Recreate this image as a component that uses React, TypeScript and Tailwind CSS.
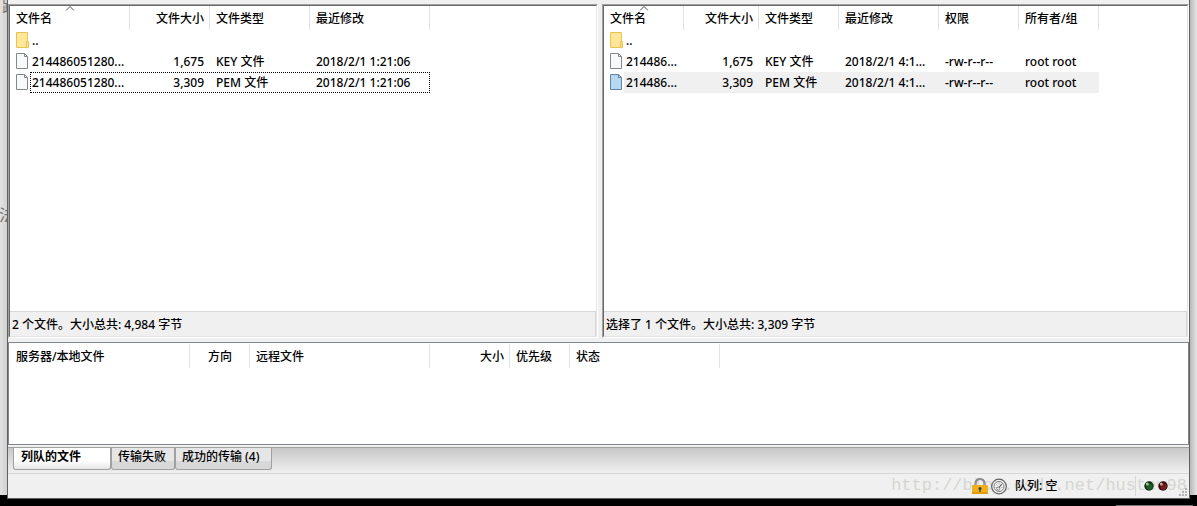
import { type ReactNode } from "react";
import clsx from "clsx";

type Column = { label: string; width: string; align?: "right" | "center"; sorted?: boolean };
type Row = { cells: string[]; icon: "folder" | "file"; state?: "focused" | "selected" };

const localColumns: Column[] = [
  { label: "文件名", width: "w-[120px]", sorted: true },
  { label: "文件大小", width: "w-[80px]", align: "right" },
  { label: "文件类型", width: "w-[100px]" },
  { label: "最近修改", width: "w-[120px]" },
];

const remoteColumns: Column[] = [
  { label: "文件名", width: "w-[80px]", sorted: true },
  { label: "文件大小", width: "w-[75px]", align: "right" },
  { label: "文件类型", width: "w-[80px]" },
  { label: "最近修改", width: "w-[100px]" },
  { label: "权限", width: "w-[80px]" },
  { label: "所有者/组", width: "w-[80px]" },
];

const queueColumns: Column[] = [
  { label: "服务器/本地文件", width: "w-[180px]" },
  { label: "方向", width: "w-[60px]", align: "center" },
  { label: "远程文件", width: "w-[180px]" },
  { label: "大小", width: "w-[80px]", align: "right" },
  { label: "优先级", width: "w-[60px]" },
  { label: "状态", width: "w-[150px]" },
];

const localRows: Row[] = [
  { icon: "folder", cells: ["..", "", "", ""] },
  { icon: "file", cells: ["214486051280...", "1,675", "KEY 文件", "2018/2/1 1:21:06"] },
  { icon: "file", state: "focused", cells: ["214486051280...", "3,309", "PEM 文件", "2018/2/1 1:21:06"] },
];

const remoteRows: Row[] = [
  { icon: "folder", cells: ["..", "", "", "", "", ""] },
  { icon: "file", cells: ["214486...", "1,675", "KEY 文件", "2018/2/1 4:1...", "-rw-r--r--", "root root"] },
  {
    icon: "file",
    state: "selected",
    cells: ["214486...", "3,309", "PEM 文件", "2018/2/1 4:1...", "-rw-r--r--", "root root"],
  },
];

function FolderIcon() {
  return (
    <svg width="14" height="16" viewBox="0 0 14 16" className="shrink-0" aria-hidden="true">
      <path d="M.5.5h11v15H.5z" fill="#ffe699" stroke="#e8c252" />
      <path d="M10.5 9.5h2v6h-2z" fill="#ffe08a" stroke="#e8c252" />
    </svg>
  );
}

function FileIcon({ selected }: { selected: boolean }) {
  const fill = selected ? "#b7d6ef" : "#f8f9fa";
  const stroke = selected ? "#5f86a8" : "#85888b";
  return (
    <svg width="14" height="16" viewBox="0 0 14 16" className="shrink-0" aria-hidden="true">
      <path d="M.5.5h8l3 3v12H.5z" fill={fill} stroke={stroke} />
      <path d="M8.5.5v3h3" fill="none" stroke={stroke} />
    </svg>
  );
}

function ListTable({ name, columns, rows }: { name: string; columns: Column[]; rows: Row[] }) {
  return (
    <table aria-label={name} className="w-0 table-fixed border-collapse whitespace-nowrap">
      <thead>
        <tr>
          {columns.map((c) => (
            <th key={c.label} className={clsx("relative p-0 font-medium", c.width)}>
              <div
                className={clsx(
                  "h-6 border-r border-[#e2e2e2] pr-[5px] pl-1.5 leading-[26px]",
                  c.align === "right" ? "text-right" : c.align === "center" ? "text-center" : "text-left",
                )}
              >
                {c.label}
              </div>
              {c.sorted && (
                <svg width="9" height="5" viewBox="0 0 9 5" className="absolute top-0 left-1/2 -translate-x-1/2" aria-hidden="true">
                  <path d="M.5 4.5l4-4 4 4" fill="none" stroke="#555" />
                </svg>
              )}
            </th>
          ))}
        </tr>
      </thead>
      <tbody>
        {rows.map((row, r) => {
          const mark = row.state === "selected" && "bg-[#f0f0f0]";
          return (
            <tr key={r} className="relative">
              {row.cells.map((text, i) => (
                <td key={i} className="p-0">
                  {i === 0 ? (
                    <div className="flex h-[21px] pl-1.5">
                      <div className="pt-0.5">
                        {row.icon === "folder" ? <FolderIcon /> : <FileIcon selected={row.state === "selected"} />}
                      </div>
                      <div className={clsx("flex h-full flex-1 items-center pl-0.5", mark)}>{text}</div>
                      {row.state === "focused" && (
                        <div className="absolute inset-y-0 right-0 left-5 border border-dotted border-black" />
                      )}
                    </div>
                  ) : (
                    <div
                      className={clsx(
                        "flex h-[21px] items-center px-1.5",
                        columns[i].align === "right" && "justify-end",
                        mark,
                      )}
                    >
                      {text}
                    </div>
                  )}
                </td>
              ))}
            </tr>
          );
        })}
      </tbody>
    </table>
  );
}

function FilePane({ name, status, children }: { name: string; status: string; children: ReactNode }) {
  return (
    <section
      aria-label={name}
      className="flex min-w-0 border border-t-[#a0a0a0] border-r-white border-b-white border-l-[#a0a0a0]"
    >
      <div className="flex min-w-0 flex-1 flex-col border border-t-[#696969] border-r-[#e3e3e3] border-b-[#e3e3e3] border-l-[#696969] bg-white">
        <div className="flex-1 overflow-hidden">{children}</div>
        <p className="h-[25px] border-t border-r border-[#d7d7d7] bg-[#f0f0f0] pl-0.5 leading-[26px]">{status}</p>
      </div>
    </section>
  );
}

function LockIcon() {
  return (
    <svg width="16" height="17" viewBox="0 0 16 17" aria-label="已加密" role="img">
      <path d="M3.5 8V5.5a4.5 4.5 0 0 1 9 0V8" fill="none" stroke="#6b6b68" strokeWidth="2" />
      <path d="M3.5 8V5.5a4.5 4.5 0 0 1 9 0V8" fill="none" stroke="#b5b5b0" strokeWidth=".7" />
      <rect x="0" y="7" width="16" height="9" rx="1" fill="#efb01c" />
      <path d="M0 14h16v1a1 1 0 0 1-1 1H1a1 1 0 0 1-1-1z" fill="#e39c0c" />
      <circle cx="8" cy="10.4" r="1.5" fill="#3c3c3c" />
      <path d="M7.4 10.5h1.2v3.5H7.4z" fill="#3c3c3c" />
    </svg>
  );
}

function GaugeIcon() {
  return (
    <svg width="16" height="17" viewBox="0 0 16 17" aria-label="速度限制" role="img">
      <circle cx="8" cy="8.5" r="7.3" fill="#f5f5f5" stroke="#606060" strokeWidth="1.2" />
      <circle cx="8" cy="8.5" r="5" fill="none" stroke="#777" strokeWidth="1" />
      <path d="M5 6.5l1.5 1M8 4.5v2M4.5 9.5h1.5M11.5 9.5h-1.5" stroke="#999" strokeWidth=".8" />
      <path d="M7.3 10.5L10.8 6" stroke="#555" strokeWidth="1.2" />
      <circle cx="7.4" cy="10.6" r="1.5" fill="#fff" stroke="#666" strokeWidth=".9" />
    </svg>
  );
}

function Led({ tone, name }: { tone: "green" | "red"; name: string }) {
  const [dark, mid, light] = tone === "green" ? ["#0c2c0c", "#1f5a22", "#9dc79d"] : ["#300808", "#701c20", "#d0a0a0"];
  return (
    <svg width="10" height="10" viewBox="0 0 10 10" role="img" aria-label={name}>
      <circle cx="5" cy="5" r="4.7" fill={dark} />
      <circle cx="5.6" cy="5.8" r="3.2" fill={mid} />
      <circle cx="3.3" cy="3" r="1.5" fill={light} />
    </svg>
  );
}

function SizeGrip() {
  return (
    <svg width="8" height="8" viewBox="0 0 8 8" className="self-end" aria-hidden="true">
      <path d="M6 0h2v2H6zM3 3h2v2H3zM6 3h2v2H6zM0 6h2v2H0zM3 6h2v2H3zM6 6h2v2H6z" fill="#b4b4b4" />
    </svg>
  );
}

function Tab({ label, width, active = false }: { label: string; width: string; active?: boolean }) {
  return (
    <button
      type="button"
      role="tab"
      aria-selected={active}
      className={clsx(
        "h-[22px] rounded-b-[3px] border border-t-0 border-[#a0a0a0] text-left leading-[18px]",
        width,
        active
          ? "bg-linear-to-b from-white from-60% to-[#e6e6e6] px-[7px] pb-1 font-bold"
          : "bg-linear-to-b from-[#e6e6e6] from-60% to-[#d8d8d8] to-65% px-1.5 pb-1",
      )}
    >
      {label}
    </button>
  );
}

export default function App() {
  return (
    <div className="relative flex h-screen flex-col overflow-hidden bg-black font-['Noto_Sans','Noto_Sans_CJK_SC',sans-serif] text-[12px] font-medium text-black">
      <div className="absolute inset-x-0 top-0 bottom-[11px] bg-[#e2e2e2]" />
      <div className="absolute top-0 bottom-[11px] left-0 w-2 overflow-hidden bg-linear-to-r from-[#e2e2e2] to-[#cfcfcf] text-[16px] font-normal text-[#777]">
        <span className="absolute -top-1.5 left-0.5">路</span>
        <span className="absolute top-[203px] -left-px">法</span>
      </div>
      <div className="absolute top-0 right-0 bottom-[11px] w-[7px] bg-linear-to-r from-[#b8b8b8] to-[#e6e6e6]" />
      <div className="absolute right-1 bottom-0 h-px w-[77px] bg-[#777]" />

      <main className="relative mx-[7px] mb-[7px] flex min-h-0 flex-1 flex-col border-x border-b border-[#606060] bg-[#f0f0f0] pt-1">
        <div className="grid min-h-0 flex-1 grid-cols-[590fr_587fr] gap-1">
          <FilePane name="本地文件" status="2 个文件。大小总共: 4,984 字节">
            <ListTable name="本地文件列表" columns={localColumns} rows={localRows} />
          </FilePane>
          <FilePane name="远程文件" status="选择了 1 个文件。大小总共: 3,309 字节">
            <ListTable name="远程文件列表" columns={remoteColumns} rows={remoteRows} />
          </FilePane>
        </div>

        <section aria-label="传输队列" className="mt-1 h-[103px] border border-[#828790] bg-white px-px pt-px">
          <ListTable name="队列" columns={queueColumns} rows={[]} />
        </section>

        <div className="mt-0.5 border-b border-[#d7d7d7]">
          <div
            role="tablist"
            className="flex h-[26px] border-t border-[#a0a0a0] bg-linear-to-b from-[#c8c8c8] to-[#f0f0f0] pl-[5px]"
          >
            <Tab label="列队的文件" width="w-[98px]" active />
            <Tab label="传输失败" width="w-[64px]" />
            <Tab label="成功的传输 (4)" width="w-[97px]" />
          </div>
        </div>

        <footer className="relative flex h-6 items-center justify-end pr-0.5">
          <span className="absolute top-0 right-0.5 font-['Liberation_Mono',monospace] text-[17px] leading-6 font-normal text-[#d6d6d2]">
            http://blog.csdn.net/hustew98
          </span>
          <div className="relative flex h-full items-center">
            <div className="flex items-center gap-[3px]">
              <LockIcon />
              <GaugeIcon />
            </div>
            <span className="ml-2 w-[120px]">队列: 空</span>
            <div className="flex h-5 items-center gap-1 border-l border-[#d7d7d7] pl-2">
              <Led tone="green" name="接收" />
              <Led tone="red" name="发送" />
            </div>
            <div className="ml-[11px] flex h-full pb-0.5">
              <SizeGrip />
            </div>
          </div>
        </footer>
      </main>
    </div>
  );
}
